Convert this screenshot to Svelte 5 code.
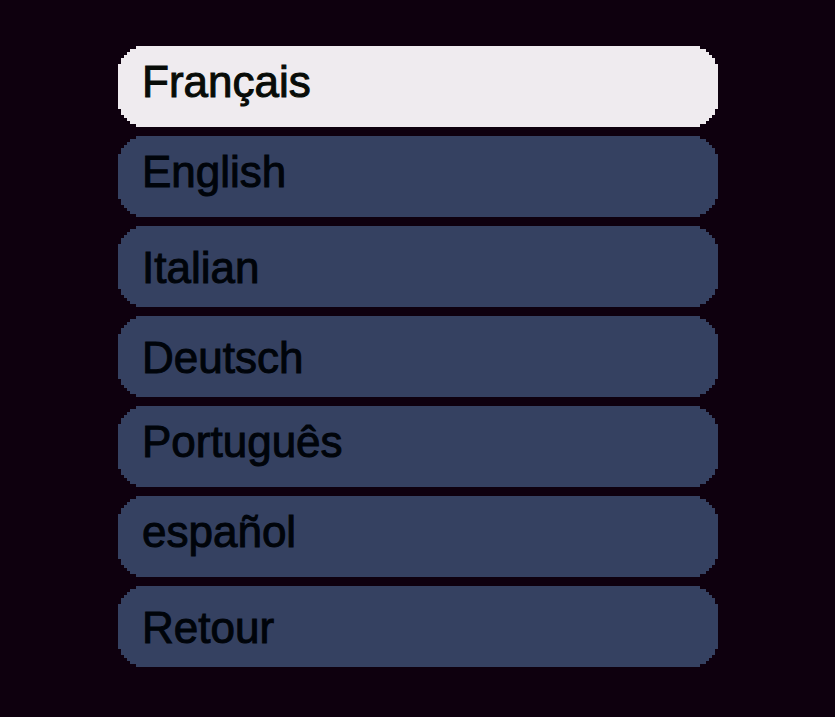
<script>
  // low: the label has no descender and sits a little lower in its row
  const languages = [
    { code: 'fr', label: 'Français', low: false },
    { code: 'en', label: 'English', low: false },
    { code: 'it', label: 'Italian', low: true },
    { code: 'de', label: 'Deutsch', low: true },
    { code: 'pt', label: 'Português', low: false },
    { code: 'es', label: 'español', low: false },
    { code: 'back', label: 'Retour', low: true }
  ];

  let selected = $state('fr');
</script>

<main class="menu">
  {#each languages as item (item.code)}
    <button
      type="button"
      class="item"
      class:low={item.low}
      class:selected={selected === item.code}
      aria-pressed={selected === item.code}
      onclick={() => (selected = item.code)}
    >
      {item.label}
    </button>
  {/each}
</main>

<style>
  :global(body) {
    margin: 0;
    background: #0e000e;
  }

  .menu {
    display: flex;
    flex-direction: column;
    gap: 9px;
    padding: 46px 117px 50px 118px;
  }

  .item {
    padding: 11px 24px 20px;
    border: 0;
    background: #354161;
    color: #00040a;
    font-family: 'Liberation Sans', Arial, sans-serif;
    font-size: 44px;
    line-height: 50px;
    -webkit-text-stroke: 1px currentColor;
    text-align: left;
    cursor: pointer;
    /* stepped pixel corners */
    clip-path: polygon(
      0 18px, 3px 18px, 3px 12px, 6px 12px, 6px 9px, 9px 9px,
      9px 6px, 12px 6px, 12px 3px, 18px 3px, 18px 0,
      calc(100% - 18px) 0, calc(100% - 18px) 3px, calc(100% - 12px) 3px,
      calc(100% - 12px) 6px, calc(100% - 9px) 6px, calc(100% - 9px) 9px,
      calc(100% - 6px) 9px, calc(100% - 6px) 12px, calc(100% - 3px) 12px,
      calc(100% - 3px) 18px, 100% 18px,
      100% calc(100% - 18px), calc(100% - 3px) calc(100% - 18px),
      calc(100% - 3px) calc(100% - 12px), calc(100% - 6px) calc(100% - 12px),
      calc(100% - 6px) calc(100% - 9px), calc(100% - 9px) calc(100% - 9px),
      calc(100% - 9px) calc(100% - 6px), calc(100% - 12px) calc(100% - 6px),
      calc(100% - 12px) calc(100% - 3px), calc(100% - 18px) calc(100% - 3px),
      calc(100% - 18px) 100%, 18px 100%,
      18px calc(100% - 3px), 12px calc(100% - 3px), 12px calc(100% - 6px),
      9px calc(100% - 6px), 9px calc(100% - 9px), 6px calc(100% - 9px),
      6px calc(100% - 12px), 3px calc(100% - 12px), 3px calc(100% - 18px),
      0 calc(100% - 18px)
    );
  }

  .low {
    padding-top: 17px;
    padding-bottom: 14px;
  }

  .selected {
    background: #efebef;
    color: #080c08;
  }
</style>
